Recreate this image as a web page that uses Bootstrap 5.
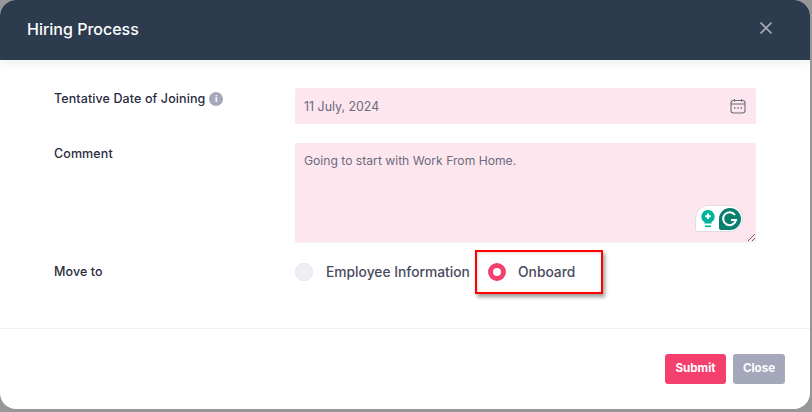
<!DOCTYPE html>
<html lang="en">
<head>
    <meta charset="UTF-8">
    <meta name="viewport" content="width=device-width, initial-scale=1.0">
    <title>Hiring Process</title>
    <link href="https://cdn.jsdelivr.net/npm/bootstrap@5.3.0/dist/css/bootstrap.min.css" rel="stylesheet">
    <style>
        html, body { height: 100%; }
        body {
            margin: 0;
            overflow: hidden;
            background: #979797;
            font-family: Inter, "Liberation Sans", sans-serif;
            font-size: 12.5px;
            color: #2b2b40;
        }
        .hire-modal {
            width: 810px;
            height: 409px;
            background: #fff;
            border: 0;
            border-radius: 16px;
            overflow: hidden;
        }
        .hire-head {
            height: 60px;
            padding: 0 38px 0 27px;
            background: #2c3b4d;
            border: 0;
            border-radius: 0;
            box-shadow: 0 4px 10px rgba(44, 59, 77, .08);
        }
        .hire-title { font-size: 16px; font-weight: 500; color: #fff; line-height: 1; margin-top: -3px !important; }
        .hire-x { display: block; width: 12px; height: 12px; padding: 0; border: 0; background: none; margin-top: -4px; }
        .hire-x svg { display: block; }
        .hire-body { height: 268px; padding: 28px 54px 0 54px; flex: none; }
        .hire-label { width: 241px; flex: none; font-weight: 500; letter-spacing: .1px; }
        .label-top { padding-top: 2px; }
        .hire-field {
            background: #fee6ee;
            border: 0;
            border-radius: 2px;
            color: #6b6b80;
            font-size: 12.4px;
        }
        .date-field { height: 36px; padding: 2px 10px 0 9px; margin-bottom: 19px; }
        .cal-icon { margin-top: -2px; }
        .comment-field {
            display: block;
            width: 100%;
            height: 99px;
            padding: 9px;
            font-size: 12.15px;
            box-shadow: 0 1px 2px rgba(0, 0, 0, .06);
        }
        .comment-field:focus { outline: 0; }
        .info-dot {
            display: inline-flex;
            align-items: center;
            justify-content: center;
            width: 14px;
            height: 14px;
            margin-left: 4px;
            border-radius: 50%;
            background: #a5a8ba;
            color: #fff;
            font-size: 9px;
            font-weight: 700;
            vertical-align: 1px;
        }
        .grammar-chip {
            position: absolute;
            right: 13px;
            bottom: 10px;
            width: 48px;
            height: 27px;
            padding-right: 1px;
            background: #fff;
            border: 1px solid #dcdce6;
            border-radius: 13px 13px 13px 3px;
        }
        .hire-move { margin-top: 20px; }
        .radio-dot {
            flex: none;
            width: 18px;
            height: 18px;
            border-radius: 50%;
            background: #eef0f3;
            border: 1px solid #dfe1e6;
        }
        .radio-dot-on { background: #fff; border: 5px solid #f5406e; }
        .radio-text { font-size: 13.8px; font-weight: 500; color: #4a4a5e; white-space: nowrap; }
        .radio-one { width: 180px; gap: 13px; }
        .radio-two { margin-left: 13px; gap: 12px; }
        .mark-box {
            position: absolute;
            left: 180px;
            top: 50%;
            margin-top: -22px;
            width: 128px;
            height: 44px;
            border: 2px solid #f00;
            box-shadow: 2px 3px 4px rgba(0, 0, 0, .4), inset 1px 1px 3px rgba(0, 0, 0, .15);
            pointer-events: none;
        }
        .hire-foot { height: 81px; padding: 0 25px 0 0; border-top: 1px solid #eff0f2; border-radius: 0; flex-shrink: 0; gap: 7px; }
        .hire-btn {
            height: 30px;
            padding: 0;
            margin: 0;
            border: 0;
            border-radius: 3px;
            color: #fff;
            font-size: 11.6px;
            font-weight: 700;
        }
        .btn-submit { width: 61px; background: #f5406e; }
        .btn-off { width: 52px; background: #a5a8ba; }
    </style>
</head>
<body>
    <div class="modal-content hire-modal">
        <div class="modal-header hire-head d-flex justify-content-between align-items-center">
            <h5 class="hire-title m-0">Hiring Process</h5>
            <button type="button" class="hire-x" aria-label="Close">
                <svg width="12" height="12" viewBox="0 0 12 12"><path d="M.5.500l11 11M11.500.500l-11 11" stroke="#a3aab5" stroke-width="1.600" fill="none"/></svg>
            </button>
        </div>
        <div class="modal-body hire-body">
            <div class="d-flex">
                <div class="hire-label label-top">Tentative Date of Joining<span class="info-dot">i</span></div>
                <div class="hire-field date-field flex-grow-1 d-flex align-items-center justify-content-between">
                    <span>11 July, 2024</span>
                    <svg class="cal-icon" width="16" height="16" viewBox="0 0 16 16" fill="none" stroke="#6b6b7a" stroke-width="1.100">
                        <rect x="1" y="2.500" width="14" height="12.500" rx="2.500"/>
                        <path d="M1 6h14M4.500 1v2.500M11.500 1v2.500"/>
                        <path d="M4 10h1.400M7.300 10h1.400M10.600 10H12" stroke-width="1.300"/>
                    </svg>
                </div>
            </div>
            <div class="d-flex">
                <div class="hire-label label-top">Comment</div>
                <div class="flex-grow-1 position-relative">
                    <textarea class="hire-field comment-field">Going to start with Work From Home.</textarea>
                    <div class="grammar-chip d-flex align-items-center justify-content-between ps-1">
                        <svg width="16" height="20" viewBox="0 0 16 20">
                            <path d="M8 1a6.500 6.500 0 0 0-3.500 12v1.500h7V13A6.500 6.500 0 0 0 8 1z" fill="#00b39b"/>
                            <path d="M5 16.500h6v1.600H5z" fill="#00b39b"/>
                            <path d="M8 4.500v5.500M5.200 7.200h5.600" stroke="#fff" stroke-width="2"/>
                        </svg>
                        <svg width="22" height="22" viewBox="0 0 22 22">
                            <path d="M0 11a11 11 0 1 1 11 11H2a2 2 0 0 1-2-2z" fill="#087f6d"/>
                            <path d="M16 7a6.500 6.500 0 1 0 1 5h-5" fill="none" stroke="#fff" stroke-width="2"/>
                        </svg>
                    </div>
                </div>
            </div>
            <div class="d-flex align-items-center hire-move">
                <div class="hire-label">Move to</div>
                <div class="d-flex align-items-center position-relative">
                    <div class="radio-one d-flex align-items-center">
                        <span class="radio-dot"></span><span class="radio-text">Employee Information</span>
                    </div>
                    <div class="radio-two d-flex align-items-center">
                        <span class="radio-dot radio-dot-on"></span><span class="radio-text">Onboard</span>
                    </div>
                    <div class="mark-box"></div>
                </div>
            </div>
        </div>
        <div class="modal-footer hire-foot d-flex justify-content-end align-items-center">
            <button type="button" class="hire-btn btn-submit">Submit</button>
            <button type="button" class="hire-btn btn-off">Close</button>
        </div>
    </div>
    <script src="https://cdn.jsdelivr.net/npm/bootstrap@5.3.0/dist/js/bootstrap.bundle.min.js"></script>
</body>
</html>
